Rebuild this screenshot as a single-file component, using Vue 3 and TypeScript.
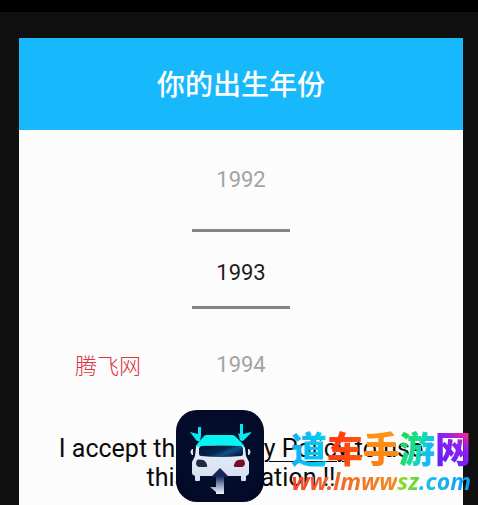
<script setup lang="ts">
import { ref } from 'vue'

interface Glyph {
  text: string
  tone: string
}

const year = ref<number>(1993)

const siteName: Glyph[] = [
  { text: '道', tone: 'cyan' },
  { text: '车', tone: 'red' },
  { text: '手', tone: 'orange' },
  { text: '游', tone: 'green' },
  { text: '网', tone: 'violet' },
]

const siteUrl: Glyph[] = [
  { text: 'ww.lmww', tone: 'warm' },
  { text: 'sz', tone: 'lime' },
  { text: '.com', tone: 'sky' },
]
</script>

<template>
  <div class="screen">
    <div class="status-bar"></div>
    <main class="dialog">
      <header class="dialog-header">
        <h1 id="year-title">你的出生年份</h1>
      </header>
      <div class="dialog-body">
        <div class="picker" role="group" aria-labelledby="year-title">
          <button type="button" class="step" @click="year--">{{ year - 1 }}</button>
          <input v-model.number="year" class="current" type="text" inputmode="numeric" aria-labelledby="year-title" />
          <button type="button" class="step" @click="year++">{{ year + 1 }}</button>
        </div>
        <p class="consent">I accept the <a href="#privacy">Privacy Policy</a> to use<br />this application !!</p>
      </div>
      <span class="source-mark">腾飞网</span>
      <svg class="app-icon" viewBox="0 0 88 92" aria-hidden="true">
        <defs>
          <radialGradient id="icon-bg" cx="50%" cy="45%" r="70%">
            <stop offset="0" stop-color="#041334" />
            <stop offset="1" stop-color="#020824" />
          </radialGradient>
          <linearGradient id="glass" x1="0" y1="0" x2="1" y2="0.6">
            <stop offset="0" stop-color="#051230" />
            <stop offset="0.55" stop-color="#08254f" />
            <stop offset="0.75" stop-color="#124f88" />
            <stop offset="1" stop-color="#08204a" />
          </linearGradient>
          <linearGradient id="shaft" x1="0" y1="0" x2="0" y2="1">
            <stop offset="0" stop-color="#172656" />
            <stop offset="0.5" stop-color="#8d97b9" />
            <stop offset="1" stop-color="#f2f4fb" />
          </linearGradient>
          <linearGradient id="body" x1="0" y1="0" x2="0" y2="1">
            <stop offset="0" stop-color="#e9eefa" />
            <stop offset="1" stop-color="#d3dff0" />
          </linearGradient>
        </defs>
        <rect width="88" height="92" rx="21" fill="url(#icon-bg)" />
        <path d="M20 37Q20 35 22 34H66Q68 35 69 38L70 46 73 52V63Q73 65 70 66V70Q70 71 69 71H66Q65 71 65 70V66H24V70Q24 71 23 71H20Q19 71 19 70V66Q16 65 16 63V52L19 46Z" fill="url(#body)" />
        <path d="M20 37Q20 35 22 33L28 26Q29 25 31 25H56Q58 25 59 26L66 33Q68 35 68 37Q44 34 20 37Z" fill="#08f4f3" />
        <path d="M23 38Q24 36 26 36Q44 35 64 36Q66 36 67 38V44Q67 46 65 46Q44 48 25 46Q23 46 23 44Z" fill="url(#glass)" />
        <path d="M17 39h-1q-3 3 0 6h1z" fill="#d9e4f6" />
        <path d="M72 39h1q3 3 0 6h-1z" fill="#d9e4f6" />
        <path d="M14 22L22 24V17H25V26L24 31Q22 32 20 30Z" fill="#08e9ef" />
        <path d="M64 14H67V24L75 22V23L68 30Q66 32 64 30L62 23 64 24Z" fill="#08e9ef" />
        <path d="M21 50Q22 49 27 50Q30 51 31 55Q32 57 29 57H23Q20 56 20 53Z" fill="#202941" />
        <path d="M68 50Q67 49 62 50Q59 51 58 55Q57 57 60 57H66Q69 56 69 53Z" fill="#7a0b26" />
        <path d="M44 58L53 67H35Z" fill="#172656" />
        <path d="M40 66H48V84H40V82L34 77H40Z" fill="url(#shaft)" />
      </svg>
      <div class="site-mark">
        <div class="site-name">
          <span v-for="g in siteName" :key="g.text" :class="g.tone">{{ g.text }}</span>
        </div>
        <div class="site-url">
          <span v-for="g in siteUrl" :key="g.text" :class="g.tone">{{ g.text }}</span>
        </div>
      </div>
    </main>
  </div>
</template>

<style>
body {
  background: #101010;
}
</style>

<style scoped>
.screen {
  display: flex;
  flex-direction: column;
  min-height: 100vh;
  background: #101010;
  font-family: Roboto, "Noto Sans CJK SC", sans-serif;
}

.status-bar {
  height: 12px;
  background: #000;
}

.dialog {
  position: relative;
  display: flex;
  flex: 1;
  flex-direction: column;
  margin: 26px 15px 0 19px;
  background: #fcfcfc;
}

.dialog-header {
  box-sizing: border-box;
  display: flex;
  align-items: center;
  justify-content: center;
  height: 92px;
  padding-top: 4px;
  background: #18b9fc;
}

h1 {
  margin: 0;
  color: #fff;
  font-size: 28px;
  font-weight: 500;
  line-height: 40px;
}

.dialog-body {
  display: flex;
  flex-direction: column;
  align-items: center;
}

.picker {
  display: flex;
  flex-direction: column;
  align-items: center;
  width: 98px;
}

.step,
.current {
  box-sizing: border-box;
  width: 100%;
  margin: 0;
  padding: 0;
  border: 0;
  background: none;
  font-family: inherit;
  font-size: 22px;
  text-align: center;
}

.step {
  height: 99px;
  color: #a3a3a3;
}

.current {
  height: 80px;
  margin-bottom: 6px;
  padding-top: 6px;
  border-top: 3px solid #858585;
  border-bottom: 3px solid #858585;
  color: #1c1c1c;
}

.consent {
  margin: 20px 0 0;
  color: #0a0a0a;
  font-size: 25px;
  line-height: 29px;
  text-align: center;
  white-space: nowrap;
}

.consent a {
  color: inherit;
  text-decoration-thickness: 1px;
  text-underline-offset: 4px;
}

.source-mark {
  position: absolute;
  top: 310px;
  left: 56px;
  color: #dc3340;
  font-family: "Noto Sans CJK SC", sans-serif;
  font-size: 22px;
  font-weight: 300;
  line-height: 32px;
}

.app-icon {
  position: absolute;
  top: 372px;
  left: 157px;
  width: 88px;
  height: 92px;
}

.site-mark {
  position: absolute;
  top: 388px;
  right: -8px;
  display: flex;
  flex-direction: column;
  align-items: flex-end;
  white-space: nowrap;
}

.site-name {
  display: flex;
  font-family: "Noto Sans CJK SC", sans-serif;
  font-size: 36px;
  font-weight: 900;
  line-height: 42px;
}

.site-url {
  display: flex;
  font-family: "Liberation Sans Narrow", "Noto Sans", sans-serif;
  font-size: 23px;
  font-style: italic;
  font-weight: 700;
  line-height: 26px;
}

.site-mark span {
  background-clip: text;
  color: transparent;
}

.cyan {
  background-image: linear-gradient(90deg, #15aef5, #05cff0);
}

.red {
  background-image: linear-gradient(100deg, #ff3516, #ff5a0a);
}

.orange {
  background-image: linear-gradient(#ff9a12, #fd7c16);
}

.green {
  background-image: linear-gradient(110deg, #20d65c 20%, #15e09b 50%, #14bef5 75%);
}

.violet {
  background-image: linear-gradient(35deg, #6a1ff5 20%, #8f22ee 60%, #f72c8e 85%);
}

.warm {
  background-image: linear-gradient(90deg, #f8442a, #f0662a 40%, #f08a1c);
}

.lime {
  background-image: linear-gradient(90deg, #9bd82a, #5ed83c);
}

.sky {
  background-image: linear-gradient(90deg, #1bc5e8, #149bf0);
}
</style>
